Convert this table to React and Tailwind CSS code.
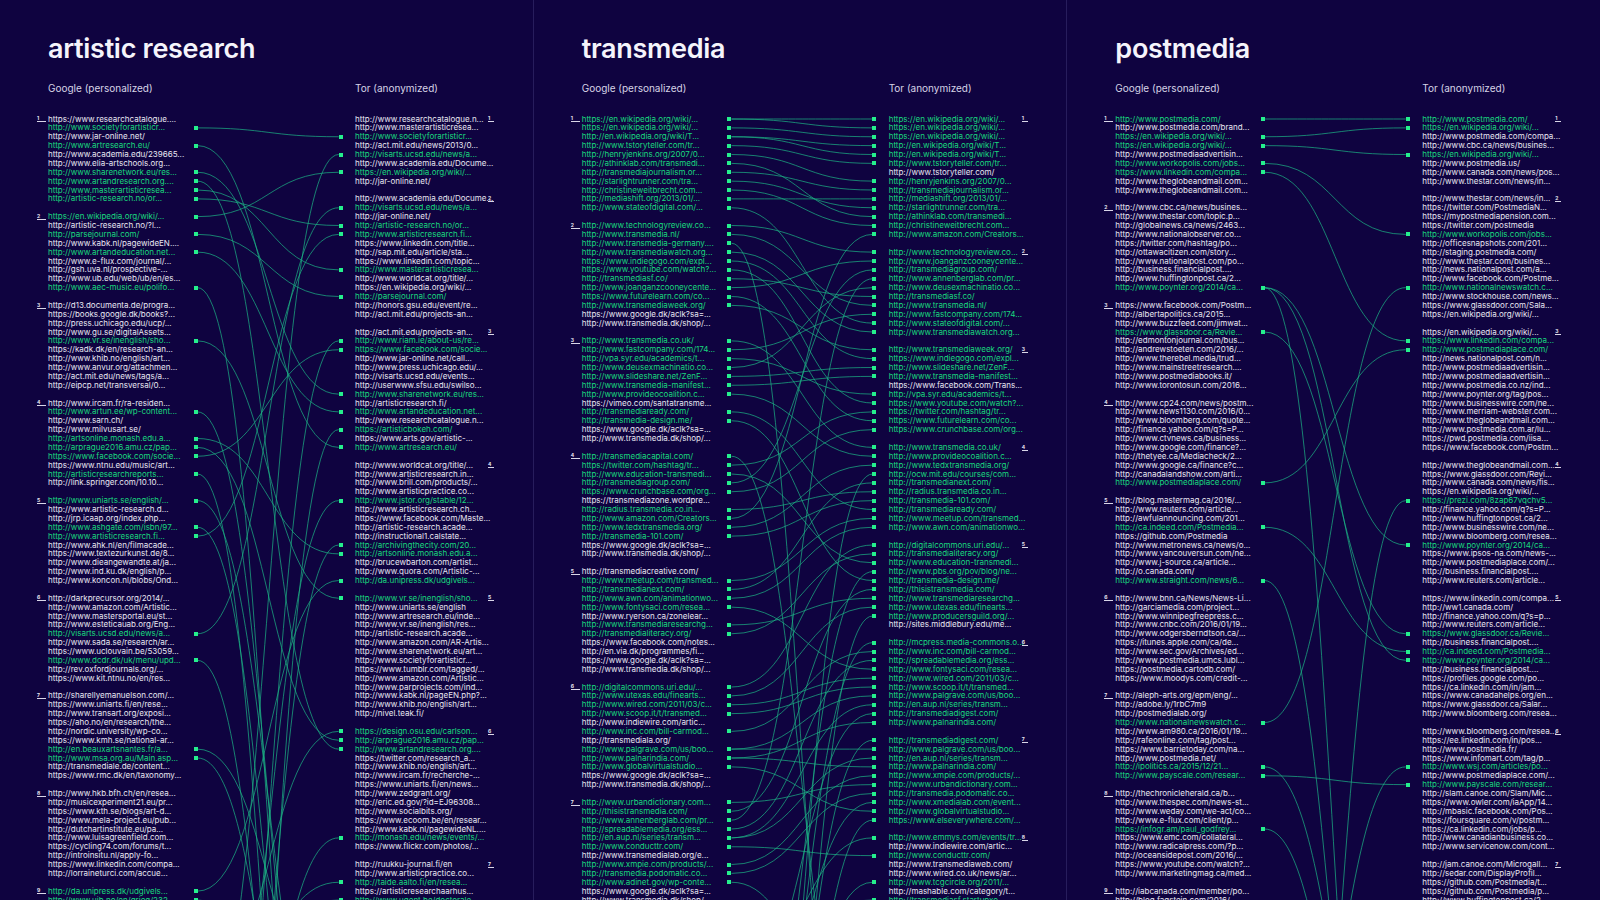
import React from "react";

const ROW = 8.875;
const TOP = 114.5625;
const GX = 197.5;
const TX = 338.7;

const rowY = (i) => TOP + ROW * (i + 0.5);

const parse = (txt) =>
  txt
    .trim()
    .split("\n")
    .map((l) => l.trim());

const panels = [
  {
    title: "artistic research",
    google: parse(`
https://www.researchcatalogue....
*http://www.societyforartisticr...
http://www.jar-online.net/
*http://www.artresearch.eu/
http://www.academia.edu/239665...
http://www.elia-artschools.org...
*http://www.sharenetwork.eu/res...
*http://www.artandresearch.org....
*http://www.masterartisticresea...
*http://artistic-research.no/or...

*https://en.wikipedia.org/wiki/...
http://artistic-research.no/?l...
*http://parsejournal.com/
http://www.kabk.nl/pagewideEN....
*http://www.artandeducation.net...
http://www.e-flux.com/journal/...
http://gsh.uva.nl/prospective-...
http://www.ub.edu/web/ub/en/es...
*http://www.aec-music.eu/polifo...

http://d13.documenta.de/progra...
https://books.google.dk/books?...
http://press.uchicago.edu/ucp/...
http://www.gu.se/digitalAssets...
*http://www.vr.se/inenglish/sho...
https://kadk.dk/en/research-an...
http://www.khib.no/english/art...
http://www.anvur.org/attachmen...
http://act.mit.edu/news/tags/a...
http://eipcp.net/transversal/0...

http://www.ircam.fr/ra-residen...
*http://www.artun.ee/wp-content...
http://www.sarn.ch/
http://www.milvusart.se/
*http://artsonline.monash.edu.a...
*http://arprague2016.amu.cz/pap...
*https://www.facebook.com/socie...
https://www.ntnu.edu/music/art...
*http://artisticresearchreports...
http://link.springer.com/10.10...

*http://www.uniarts.se/english/...
http://www.artistic-research.d...
http://jrp.icaap.org/index.php...
*http://www.ashgate.com/isbn/97...
*http://www.artisticresearch.fi...
http://www.ahk.nl/en/filmacade...
https://www.textezurkunst.de/8...
http://www.dieangewandte.at/ja...
http://www.ind.ku.dk/english/p...
http://www.koncon.nl/blobs/Ond...

http://darkprecursor.org/2014/...
http://www.amazon.com/Artistic...
http://www.mastersportal.eu/st...
http://www.esteticauab.org/Eng...
*http://visarts.ucsd.edu/news/a...
http://www.sada.se/research/ar...
https://www.uclouvain.be/53059...
*http://www.dcdr.dk/uk/menu/upd...
http://rev.oxfordjournals.org/...
https://www.kit.ntnu.no/en/res...

http://sharellyemanuelson.com/...
https://www.uniarts.fi/en/rese...
http://www.transart.org/exposi...
https://aho.no/en/research/the...
http://nordic.university/wp-co...
https://www.kmh.se/national-ar...
*http://en.beauxartsnantes.fr/a...
*http://www.msa.org.au/Main.asp...
http://transmediale.de/content...
https://www.rmc.dk/en/taxonomy...

http://www.hkb.bfh.ch/en/resea...
http://musicexperiment21.eu/pr...
https://www.kth.se/blogs/art-d...
http://www.mela-project.eu/pub...
http://dutchartinstitute.eu/pa...
http://www.luisagreenfield.com...
https://cycling74.com/forums/t...
http://introinsitu.nl/apply-fo...
https://www.linkedin.com/compa...
http://lorraineturci.com/accue...

*http://da.unipress.dk/udgivels...
*http://www.uib.no/en/grieg/232...
`),
    tor: parse(`
http://www.researchcatalogue.n...
http://www.masterartisticresea...
*http://www.societyforartisticr...
http://act.mit.edu/news/2013/0...
*http://visarts.ucsd.edu/news/a...
http://www.academia.edu/Docume...
*https://en.wikipedia.org/wiki/...
http://jar-online.net/

http://www.academia.edu/Docume...
*http://visarts.ucsd.edu/news/a...
http://jar-online.net/
*http://artistic-research.no/or...
*http://www.artisticresearch.fi...
https://www.linkedin.com/title...
http://sap.mit.edu/article/sta...
https://www.linkedin.com/topic...
*http://www.masterartisticresea...
http://www.worldcat.org/title/...
https://en.wikipedia.org/wiki/...
*http://parsejournal.com/
http://honors.gsu.edu/event/re...
http://act.mit.edu/projects-an...

http://act.mit.edu/projects-an...
*http://www.riam.ie/about-us/re...
*https://www.facebook.com/socie...
http://www.jar-online.net/call...
http://www.press.uchicago.edu/...
http://visarts.ucsd.edu/events...
http://userwww.sfsu.edu/swilso...
*http://www.sharenetwork.eu/res...
http://artisticresearch.fi/
*http://www.artandeducation.net...
http://www.researchcatalogue.n...
*https://artisticbokeh.com/
https://www.arts.gov/artistic-...
*http://www.artresearch.eu/

http://www.worldcat.org/title/...
http://www.artisticresearch.in...
http://www.brill.com/products/...
http://www.artisticpractice.co...
*http://www.jstor.org/stable/12...
http://www.artisticresearch.ch...
https://www.facebook.com/Maste...
http://artistic-research.acade...
http://instructional1.calstate...
*http://archivingthecity.com/20...
*http://artsonline.monash.edu.a...
http://brucewbarton.com/artist...
http://www.quora.com/Artistic-...
*http://da.unipress.dk/udgivels...

*http://www.vr.se/inenglish/sho...
http://www.uniarts.se/english
http://www.artresearch.eu/inde...
http://www.vr.se/inenglish/res...
http://artistic-research.acade...
http://www.amazon.com/AR-Artis...
http://www.sharenetwork.eu/art...
http://www.societyforartisticr...
https://www.tumblr.com/tagged/...
http://www.amazon.com/Artistic...
http://www.parprojects.com/ind...
http://www.kabk.nl/pageEN.php?...
http://www.khib.no/english/art...
http://nivel.teak.fi/

*https://design.osu.edu/carlson...
*http://arprague2016.amu.cz/pap...
*http://www.artandresearch.org....
https://twitter.com/research_a...
http://www.khib.no/english/art...
http://www.ircam.fr/recherche-...
https://www.uniarts.fi/en/news...
http://www.zedgrant.org/
http://eric.ed.gov/?id=EJ96308...
http://www.socialbits.org/
https://www.ecoom.be/en/resear...
http://www.kabk.nl/pagewideNL....
*http://monash.edu/news/events/...
https://www.flickr.com/photos/...

http://ruukku-journal.fi/en
http://www.artisticpractice.co...
*http://taide.aalto.fi/en/resea...
https://artisticresearchaarhus...
*http://www.ugent.be/doctorale...
`),
    links: [
      [1, 2], [3, 37], [6, 31], [7, 71], [8, 17], [9, 12], [11, 6], [13, 20],
      [15, 33], [19, 140], [25, 54], [33, 120], [36, 49], [37, 70], [38, 26],
      [40, 160], [43, 110], [46, 130], [47, 13], [58, 10], [61, 150], [71, 100],
      [72, 125], [87, 52], [88, 115],
      [105, 4], [135, 25], [170, 35], [118, 43], [145, 48], [99, 69], [128, 81],
      [102, 86], [96, 88],
    ],
  },
  {
    title: "transmedia",
    google: parse(`
*https://en.wikipedia.org/wiki/...
*https://en.wikipedia.org/wiki/...
*http://en.wikipedia.org/wiki/T...
*http://www.tstoryteller.com/tr...
*http://henryjenkins.org/2007/0...
*http://athinklab.com/transmedi...
*http://transmediajournalism.or...
*http://starlightrunner.com/tra...
*http://christineweitbrecht.com...
*http://mediashift.org/2013/01/...
*http://www.stateofdigital.com/...

*http://www.technologyreview.co...
*http://www.transmedia.nl/
*http://www.transmedia-germany....
*http://www.transmediawatch.org...
*https://www.indiegogo.com/expl...
*https://www.youtube.com/watch?...
*http://transmediasf.co/
*http://www.joanganzcooneycente...
*https://www.futurelearn.com/co...
*http://www.transmediaweek.org/
https://www.google.dk/aclk?sa=...
http://www.transmedia.dk/shop/...

*http://www.transmedia.co.uk/
*http://www.fastcompany.com/174...
*http://vpa.syr.edu/academics/t...
*http://www.deusexmachinatio.co...
*http://www.slideshare.net/ZenF...
*http://www.transmedia-manifest...
*http://www.provideocoalition.c...
https://vimeo.com/santatransme...
*http://transmediaready.com/
*http://transmedia-design.me/
https://www.google.dk/aclk?sa=...
http://www.transmedia.dk/shop/...

*http://transmediacapital.com/
*https://twitter.com/hashtag/tr...
*http://www.education-transmedi...
*http://transmediagroup.com/
*https://www.crunchbase.com/org...
https://transmediazone.wordpre...
*http://radius.transmedia.co.in...
*http://www.amazon.com/Creators...
*http://www.tedxtransmedia.org/
*http://transmedia-101.com/
https://www.google.dk/aclk?sa=...
http://www.transmedia.dk/shop/...

http://transmediacreative.com/
*http://www.meetup.com/transmed...
*http://transmedianext.com/
*http://www.awn.com/animationwo...
*http://www.fontysaci.com/resea...
http://www.ryerson.ca/zonelear...
*http://www.transmediaresearchg...
*http://transmedialiteracy.org/
https://www.facebook.com/notes...
http://en.via.dk/programmes/fi...
https://www.google.dk/aclk?sa=...
http://www.transmedia.dk/shop/...

*http://digitalcommons.uri.edu/...
*http://www.utexas.edu/finearts...
*http://www.wired.com/2011/03/c...
*http://www.scoop.it/t/transmed...
http://www.indiewire.com/artic...
*http://www.inc.com/bill-carmod...
http://transmediala.org/
*http://www.palgrave.com/us/boo...
*http://www.palnarindia.com/
*http://www.globalvirtualstudio...
https://www.google.dk/aclk?sa=...
http://www.transmedia.dk/shop/...

*http://www.urbandictionary.com...
*http://thisistransmedia.com/
*http://www.annenberglab.com/pr...
*http://spreadablemedia.org/ess...
*http://en.aup.nl/series/transm...
*http://www.conducttr.com/
http://www.transmedialab.org/e...
*http://www.xmpie.com/products/...
*http://transmedia.podomatic.co...
*http://www.adinet.gov/wp-conte...
https://www.google.dk/aclk?sa=...
http://www.transmedia.dk/shop/...
`),
    tor: parse(`
*https://en.wikipedia.org/wiki/...
*https://en.wikipedia.org/wiki/...
*https://en.wikipedia.org/wiki/...
*http://en.wikipedia.org/wiki/T...
*http://en.wikipedia.org/wiki/T...
*http://www.tstoryteller.com/tr...
http://www.tstoryteller.com/
*http://henryjenkins.org/2007/0...
*http://transmediajournalism.or...
*http://mediashift.org/2013/01/...
*http://starlightrunner.com/tra...
*http://athinklab.com/transmedi...
*http://christineweitbrecht.com...
*http://www.amazon.com/Creators...

*http://www.technologyreview.co...
*http://www.joanganzcooneycente...
*http://transmediagroup.com/
*http://www.annenberglab.com/pr...
*http://www.deusexmachinatio.co...
*http://transmediasf.co/
*http://www.transmedia.nl/
*http://www.fastcompany.com/174...
*http://www.stateofdigital.com/...
*http://www.transmediawatch.org...

*http://www.transmediaweek.org/
*https://www.indiegogo.com/expl...
*http://www.slideshare.net/ZenF...
*http://www.transmedia-manifest...
https://www.facebook.com/Trans...
*http://vpa.syr.edu/academics/t...
*https://www.youtube.com/watch?...
*https://twitter.com/hashtag/tr...
*https://www.futurelearn.com/co...
*https://www.crunchbase.com/org...

*http://www.transmedia.co.uk/
*http://www.provideocoalition.c...
*http://www.tedxtransmedia.org/
*http://ocw.mit.edu/courses/com...
*http://transmedianext.com/
*http://radius.transmedia.co.in...
*http://transmedia-101.com/
*http://transmediaready.com/
*http://www.meetup.com/transmed...
*http://www.awn.com/animationwo...

*http://digitalcommons.uri.edu/...
*http://transmedialiteracy.org/
*http://www.education-transmedi...
*http://www.pbs.org/pov/blog/ne...
*http://transmedia-design.me/
*http://thisistransmedia.com/
*http://www.transmediaresearchg...
*http://www.utexas.edu/finearts...
*http://www.producersguild.org/...
http://sites.middlebury.edu/me...

*http://mcpress.media-commons.o...
*http://www.inc.com/bill-carmod...
*http://spreadablemedia.org/ess...
*http://www.fontysaci.com/resea...
*http://www.wired.com/2011/03/c...
*http://www.scoop.it/t/transmed...
*http://www.palgrave.com/us/boo...
*http://en.aup.nl/series/transm...
*http://transmediadigest.com/
*http://www.palnarindia.com/

*http://transmediadigest.com/
*http://www.palgrave.com/us/boo...
*http://en.aup.nl/series/transm...
*http://www.palnarindia.com/
*http://www.xmpie.com/products/...
*http://www.urbandictionary.com...
*http://transmedia.podomatic.co...
*http://www.xmedialab.com/event...
*http://www.globalvirtualstudio...
*https://www.elseverywhere.com/...

*http://www.emmys.com/events/tr...
http://www.indiewire.com/artic...
*http://www.conducttr.com/
http://www.transmediaweb.com/
http://www.wired.co.uk/news/ar...
*http://www.tcgcircle.org/2011/...
http://mashable.com/category/t...
*http://transmediasf.startupxo...
`),
    links: [
      [0, 0], [0, 1], [1, 2], [2, 3], [2, 4], [3, 5], [4, 7], [5, 11], [6, 8],
      [7, 10], [8, 12], [9, 9], [10, 23], [12, 15], [13, 21], [14, 130], [15, 24],
      [16, 27], [17, 32], [18, 20], [19, 16], [20, 34], [21, 26], [25, 37],
      [26, 22], [27, 31], [28, 19], [29, 28], [30, 29], [31, 38], [33, 44],
      [34, 52], [38, 112], [39, 33], [40, 50], [41, 17], [42, 35], [44, 42],
      [45, 13], [46, 39], [47, 43], [52, 45], [53, 41], [54, 46], [55, 62],
      [57, 54], [58, 49], [64, 48], [65, 55], [66, 63], [67, 64], [69, 60],
      [71, 65], [71, 71], [72, 68], [72, 73], [73, 78], [77, 75], [78, 53],
      [79, 18], [80, 61], [81, 66], [81, 72], [82, 83], [84, 74], [85, 76],
      [86, 104],
      [140, 40], [118, 51], [160, 56], [125, 59], [100, 67], [135, 70],
      [108, 77], [150, 79], [97, 81], [122, 86], [95, 88],
    ],
  },
  {
    title: "postmedia",
    google: parse(`
*http://www.postmedia.com/
http://www.postmedia.com/brand...
*https://en.wikipedia.org/wiki/...
*https://en.wikipedia.org/wiki/...
http://www.postmediaadvertisin...
*http://www.workopolis.com/jobs...
*https://www.linkedin.com/compa...
http://www.theglobeandmail.com...
http://www.theglobeandmail.com...

http://www.cbc.ca/news/busines...
http://www.thestar.com/topic.p...
http://globalnews.ca/news/2463...
http://www.nationalobserver.co...
https://twitter.com/hashtag/po...
http://ottawacitizen.com/story...
http://www.nationalpost.com/po...
http://business.financialpost....
http://www.huffingtonpost.ca/2...
*http://www.poynter.org/2014/ca...

https://www.facebook.com/Postm...
http://albertapolitics.ca/2015...
http://www.buzzfeed.com/jimwat...
*https://www.glassdoor.ca/Revie...
http://edmontonjournal.com/bus...
http://andrewstoeten.com/2016/...
http://www.therebel.media/trud...
http://www.mainstreetresearch....
http://www.postmediabooks.it/
http://www.torontosun.com/2016...

http://www.cp24.com/news/postm...
http://www.news1130.com/2016/0...
http://www.bloomberg.com/quote...
http://finance.yahoo.com/q?s=P...
http://www.ctvnews.ca/business...
http://www.google.com/finance?...
http://thetyee.ca/Mediacheck/2...
http://www.google.ca/finance?c...
http://canadalandshow.com/arti...
*http://www.postmediaplace.com/

http://blog.mastermag.ca/2016/...
http://www.reuters.com/article...
http://awfulannouncing.com/201...
*http://ca.indeed.com/Postmedia...
https://github.com/Postmedia
http://www.metronews.ca/news/o...
http://www.vancouversun.com/ne...
http://www.j-source.ca/article...
http://o.canada.com/
*http://www.straight.com/news/6...

http://www.bnn.ca/News/News-Li...
http://garciamedia.com/project...
http://www.winnipegfreepress.c...
http://www.cnbc.com/2016/01/19...
http://www.odgersberndtson.ca/...
https://itunes.apple.com/ca/de...
http://www.sec.gov/Archives/ed...
http://www.postmedia.umcs.lubl...
https://postmedia.cartodb.com/
https://www.moodys.com/credit-...

http://aleph-arts.org/epm/eng/...
http://adobe.ly/1rbC7m9
http://postmedialab.org/
*http://www.nationalnewswatch.c...
http://www.am980.ca/2016/01/19...
http://rafeonline.com/tag/post...
https://www.barrietoday.com/na...
http://www.postmedia.net/
*http://ipolitics.ca/2015/12/21...
*http://www.payscale.com/resear...

http://thechronicleherald.ca/b...
http://www.thespec.com/news-st...
http://www.weday.com/we-act/co...
http://www.e-flux.com/client/p...
*https://infogr.am/paul_godfrey...
https://www.emc.com/collateral...
http://www.radicalpress.com/?p...
http://oceansidepost.com/2016/...
https://www.youtube.com/watch?...
http://www.marketingmag.ca/med...

http://iabcanada.com/member/po...
http://blog.fagstein.com/2016/...
`),
    tor: parse(`
*http://www.postmedia.com/
*https://en.wikipedia.org/wiki/...
http://www.postmedia.com/compa...
http://www.cbc.ca/news/busines...
*https://en.wikipedia.org/wiki/...
http://www.postmedia.us/
http://www.canada.com/news/pos...
http://www.thestar.com/news/in...

http://www.thestar.com/news/in...
https://twitter.com/PostmediaN...
https://mypostmediapension.com...
https://twitter.com/postmedia
*http://www.workopolis.com/jobs...
http://officesnapshots.com/201...
http://staging.postmedia.com/
http://www.thestar.com/busines...
http://news.nationalpost.com/a...
http://www.facebook.com/Postme...
*http://www.nationalnewswatch.c...
http://www.stockhouse.com/news...
https://www.glassdoor.com/Sala...
https://en.wikipedia.org/wiki/...

https://en.wikipedia.org/wiki/...
*https://www.linkedin.com/compa...
*http://www.postmediaplace.com/
http://news.nationalpost.com/n...
http://www.postmediaadvertisin...
http://www.postmediaadvertisin...
http://www.postmedia.co.nz/ind...
http://www.poynter.org/tag/pos...
http://www.businesswire.com/ne...
http://www.merriam-webster.com...
http://www.theglobeandmail.com...
http://www.postmedia.com.ar/lu...
https://pwd.postmedia.com/iisa...
https://www.facebook.com/Postm...

http://www.theglobeandmail.com...
https://www.glassdoor.com/Revi...
http://www.canada.com/news/fis...
https://en.wikipedia.org/wiki/...
*https://prezi.com/8zap67vqchv5...
http://finance.yahoo.com/q?s=P...
http://www.huffingtonpost.ca/2...
http://www.businesswire.com/ne...
http://www.bloomberg.com/resea...
*http://www.poynter.org/2014/ca...
https://www.ipsos-na.com/news-...
http://www.postmediaplace.com/...
http://business.financialpost....
http://www.reuters.com/article...

https://www.linkedin.com/compa...
http://ww1.canada.com/
http://finance.yahoo.com/q?s=p...
http://www.reuters.com/article...
*https://www.glassdoor.ca/Revie...
http://business.financialpost....
*http://ca.indeed.com/Postmedia...
*http://www.poynter.org/2014/ca...
http://business.financialpost....
https://profiles.google.com/po...
https://ca.linkedin.com/in/jam...
https://www.canadahelps.org/en...
https://www.glassdoor.ca/Salar...
http://www.bloomberg.com/resea...

http://www.bloomberg.com/resea...
https://ee.linkedin.com/in/pos...
http://www.postmedia.fr/
https://www.infomart.com/tag/p...
*http://www.wsj.com/articles/po...
http://www.postmediaplace.com/...
*http://www.payscale.com/resear...
http://slam.canoe.com/Slam/Mic...
https://www.owler.com/iaApp/14...
http://mbasic.facebook.com/Pos...
https://foursquare.com/v/postm...
https://ca.linkedin.com/jobs/p...
http://www.canadianbusiness.co...
http://www.servicenow.com/cont...

http://jam.canoe.com/Microgall...
http://sedar.com/DisplayProfil...
https://github.com/Postmedia/t...
https://github.com/Postmedia/p...
http://www.huffingtonpost.ca/2...
`),
    links: [
      [0, 0], [2, 1], [3, 4], [5, 13], [6, 25], [19, 48], [19, 61], [19, 150],
      [24, 58], [41, 26], [46, 60], [52, 140], [68, 19], [73, 120], [74, 75],
      [80, 130], [155, 43], [125, 73],
    ],
  },
];

function Marker({ n, w }) {
  return (
    <div
      className={`${w} h-[6px] border-b border-[#d9d6e8] text-[5px] leading-[5px] font-bold text-[#e9e7f2]`}
    >
      {n}
    </div>
  );
}

function numbering(list) {
  let n = 0;
  return list.map((s, i) => {
    if (s === "") return null;
    if (i === 0 || list[i - 1] === "") {
      n += 1;
      return n;
    }
    return null;
  });
}

function Url({ s, width }) {
  const green = s.startsWith("*");
  const text = green ? s.slice(1) : s;
  return (
    <div
      className={`${width} shrink-0 whitespace-nowrap text-[8px] leading-[8.875px] ${
        green ? "text-[#19d87e]" : "text-[#e9e7f2]"
      }`}
    >
      {text}
    </div>
  );
}

function Panel({ panel, last }) {
  const gNums = numbering(panel.google);
  const tNums = numbering(panel.tor);

  return (
    <div
      className={`relative h-[900px] flex-1 overflow-hidden ${
        last ? "" : "border-r border-[#271d5c]"
      }`}
    >
      <div className="h-[114.5625px] pl-[48px] pt-[35px]">
        <h1 className="text-[27px] leading-[27px] font-semibold tracking-[-0.3px] text-[#f5f4fb]">
          {panel.title}
        </h1>
        <div className="mt-[21px] flex text-[10px] leading-[10px] text-[#d6d3e6]">
          <div className="w-[307px]">Google (personalized)</div>
          <div>Tor (anonymized)</div>
        </div>
      </div>

      <svg
        className="absolute left-0 top-0"
        width="534"
        height="900"
        viewBox="0 0 534 900"
        fill="none"
      >
        {panel.links.map(([g, t], i) => {
          const y1 = rowY(g);
          const y2 = rowY(t);
          const mx = (GX + TX) / 2;
          return (
            <path
              key={i}
              d={`M ${GX} ${y1} C ${mx} ${y1}, ${mx} ${y2}, ${TX} ${y2}`}
              stroke="#1cb385"
              strokeWidth="0.8"
              opacity="0.9"
            />
          );
        })}
      </svg>

      <div className="relative flex">
        <div className="w-[160.5px] shrink-0 ml-[37px]">
          {panel.google.map((s, i) =>
            s === "" ? (
              <div key={i} className="h-[8.875px]" />
            ) : (
              <div key={i} className="flex h-[8.875px] items-center">
                <div className="w-[11px] shrink-0 self-start pt-[1.6px]">
                  {gNums[i] && <Marker n={gNums[i]} w="w-[9px]" />}
                </div>
                <Url s={s} width="w-[145.5px]" />
                {s.startsWith("*") && (
                  <div className="h-[4px] w-[4px] shrink-0 bg-[#25f08d]" />
                )}
              </div>
            )
          )}
        </div>
        <div className="ml-[141.2px] shrink-0">
          {panel.tor.map((s, i) =>
            s === "" ? (
              <div key={i} className="h-[8.875px]" />
            ) : (
              <div key={i} className="flex h-[8.875px] items-center">
                <div className="w-[16.3px] shrink-0">
                  {s.startsWith("*") && (
                    <div className="h-[4px] w-[4px] bg-[#25f08d]" />
                  )}
                </div>
                <Url s={s} width="w-[133px]" />
                <div className="w-[6px] shrink-0 self-start pt-[1.6px]">
                  {tNums[i] && <Marker n={tNums[i]} w="w-[6px]" />}
                </div>
              </div>
            )
          )}
        </div>
      </div>
    </div>
  );
}

export default function App() {
  return (
    <div
      className="flex h-[900px] w-full overflow-hidden bg-[#0f0340]"
      style={{ fontFamily: "Inter, 'Noto Sans', 'Liberation Sans', sans-serif" }}
    >
      {panels.map((p, i) => (
        <Panel key={p.title} panel={p} last={i === panels.length - 1} />
      ))}
    </div>
  );
}
